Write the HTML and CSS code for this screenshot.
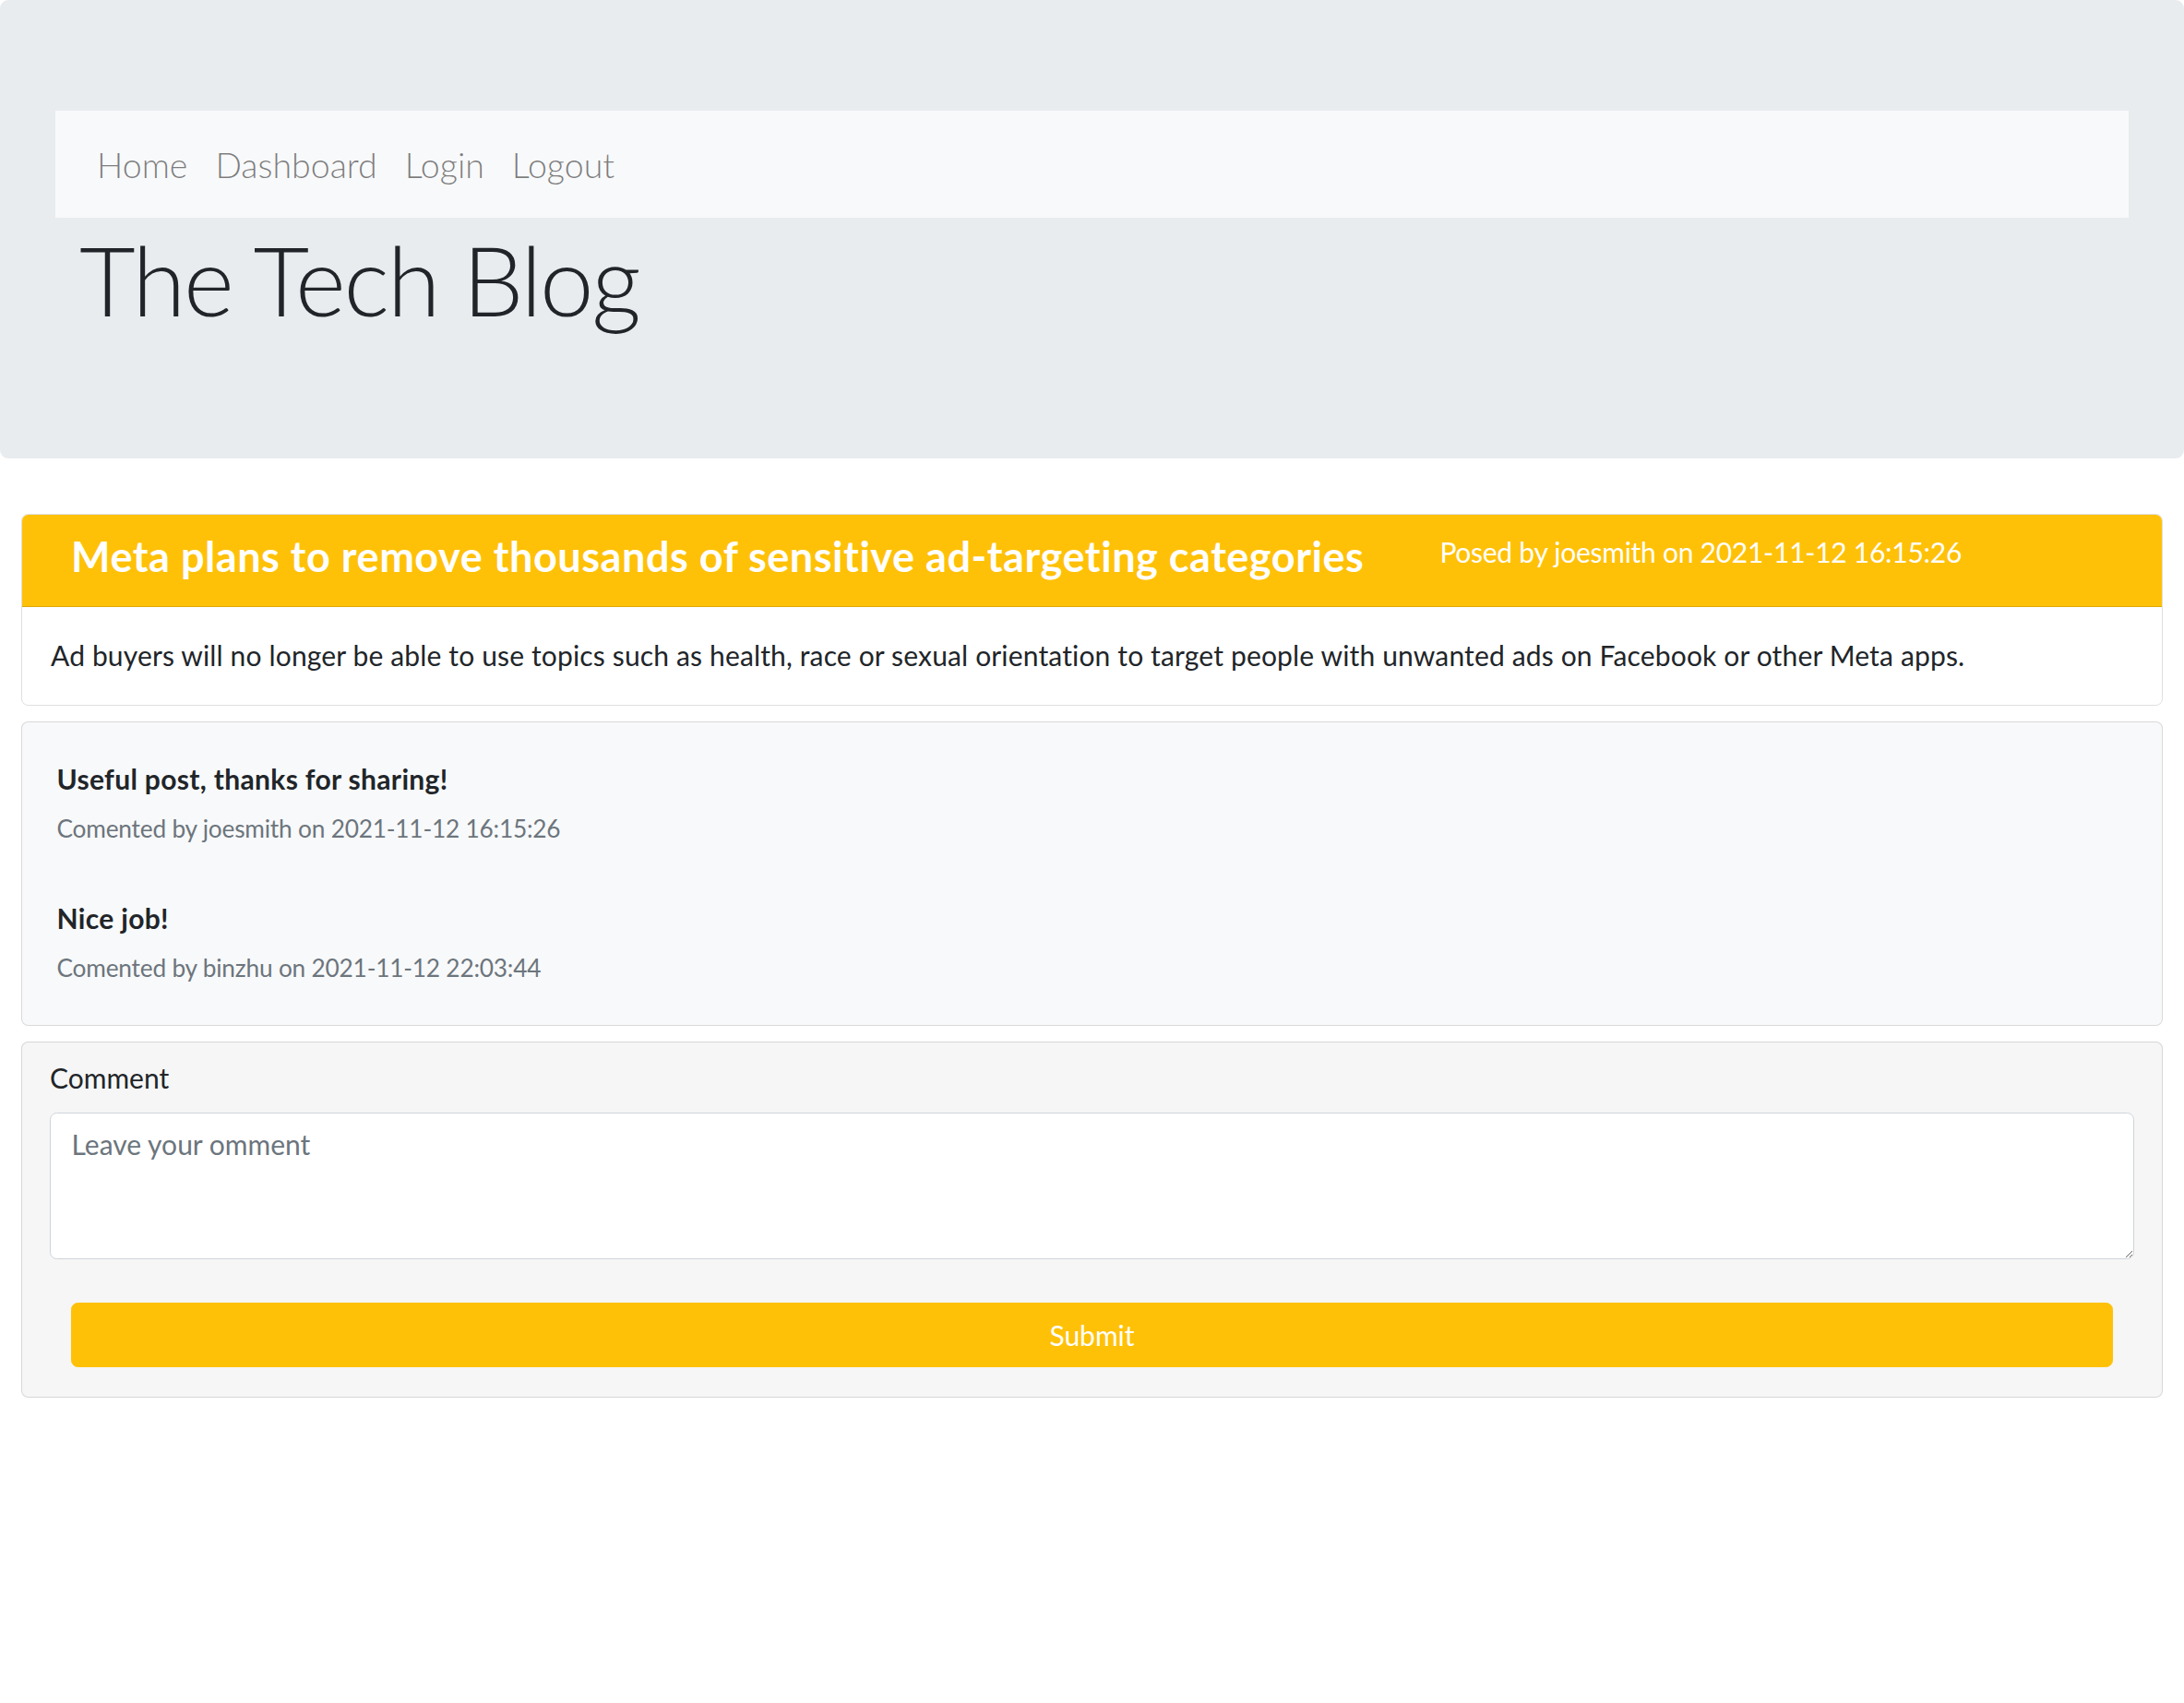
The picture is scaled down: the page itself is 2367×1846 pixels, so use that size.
FILE: index.html
```html
<!DOCTYPE html>
<html lang="en">
<head>
<meta charset="utf-8">
<title>The Tech Blog</title>
<link rel="stylesheet" href="styles.css">
</head>
<body>
<div class="jumbotron">
  <nav class="navbar">
    <a class="nav-link" href="#">Home</a>
    <a class="nav-link" href="#">Dashboard</a>
    <a class="nav-link" href="#">Login</a>
    <a class="nav-link" href="#">Logout</a>
  </nav>
  <h1 class="site-title">The Tech Blog</h1>
</div>
<main class="content">
  <article class="card post">
    <header class="post-header">
      <h4 class="post-title">Meta plans to remove thousands of sensitive ad-targeting categories</h4>
      <span class="post-meta">Posed by joesmith on 2021-11-12 16:15:26</span>
    </header>
    <div class="post-body">Ad buyers will no longer be able to use topics such as health, race or sexual orientation to target people with unwanted ads on Facebook or other Meta apps.</div>
  </article>
  <section class="card comments">
    <div class="comment">
      <h6 class="comment-text">Useful post, thanks for sharing!</h6>
      <p class="comment-meta">Comented by joesmith on 2021-11-12 16:15:26</p>
    </div>
    <div class="comment">
      <h6 class="comment-text">Nice job!</h6>
      <p class="comment-meta">Comented by binzhu on 2021-11-12 22:03:44</p>
    </div>
  </section>
  <form class="card comment-form">
    <label class="form-label" for="comment">Comment</label>
    <textarea id="comment" class="form-control" rows="3" placeholder="Leave your omment"></textarea>
    <button type="button" class="btn-submit">Submit</button>
  </form>
</main>
</body>
</html>
```
FILE: styles.css
```css
* { box-sizing: border-box; }
html, body { margin: 0; padding: 0; background: #fff; }
body {
  font-family: Lato, "Open Sans", "Liberation Sans", sans-serif;
  font-size: 30px;
  line-height: 1.5;
  color: #212529;
}
.jumbotron {
  background: #e9ecef;
  padding: 120px 60px;
  margin-bottom: 60px;
  border-radius: 9px;
}
.navbar {
  display: flex;
  background: #f8f9fa;
  padding: 15px 30px;
}
.nav-link {
  display: block;
  padding: 16px 15px 14px;
  font-size: 37.5px;
  font-weight: 300;
  line-height: 56px;
  color: rgba(0, 0, 0, 0.5);
  text-decoration: none;
}
.site-title {
  margin: 0 0 15px 26px;
  padding-top: 3px;
  height: 126px;
  font-size: 105px;
  font-weight: 300;
  line-height: 1.2;
  letter-spacing: -2.3px;
}
.content {
  padding: 0 23px;
}
.card {
  border: 1px solid rgba(0, 0, 0, 0.125);
  border-radius: 7.5px;
  margin-bottom: 17px;
  overflow: hidden;
}
.post-header {
  display: flex;
  align-items: flex-start;
  gap: 82px;
  background: #ffc107;
  border-bottom: 1px solid rgba(0, 0, 0, 0.125);
  padding: 18px 37.5px 27px 53px;
  color: #fff;
}
.post-title {
  margin: 0;
  font-size: 45px;
  font-weight: 700;
  line-height: 54px;
  letter-spacing: 0.55px;
}
.post-meta {
  font-size: 30px;
  line-height: 45px;
  letter-spacing: -0.27px;
}
.post-body {
  padding: 30px 31px 31px;
  letter-spacing: 0.15px;
}
.comments {
  background: #f8f9fa;
  padding: 39px 37.5px 42px;
}
.comment + .comment { margin-top: 55px; }
.comment-text {
  margin: 0 0 12px;
  font-size: 30px;
  font-weight: 700;
  line-height: 45px;
  letter-spacing: 0.33px;
}
.comment-meta {
  margin: 0;
  font-size: 26.25px;
  line-height: 39px;
  color: #6c757d;
  letter-spacing: -0.2px;
}
.comment-form {
  display: flex;
  flex-direction: column;
  background: #f6f6f6;
  padding: 16px 30px 32px;
}
.form-label {
  margin-bottom: 15px;
  line-height: 45px;
}
.form-control {
  display: block;
  width: 100%;
  height: 159px;
  padding: 11.25px 22.5px;
  font: inherit;
  color: #495057;
  background: #fff;
  border: 1px solid #ced4da;
  border-radius: 7.5px;
  resize: vertical;
}
.form-control::placeholder { color: #6c757d; }
.btn-submit {
  margin: 47px 23px 0;
  height: 70px;
  font: inherit;
  color: #fff;
  background: #ffc107;
  border: 1px solid #ffc107;
  border-radius: 7.5px;
}
```
